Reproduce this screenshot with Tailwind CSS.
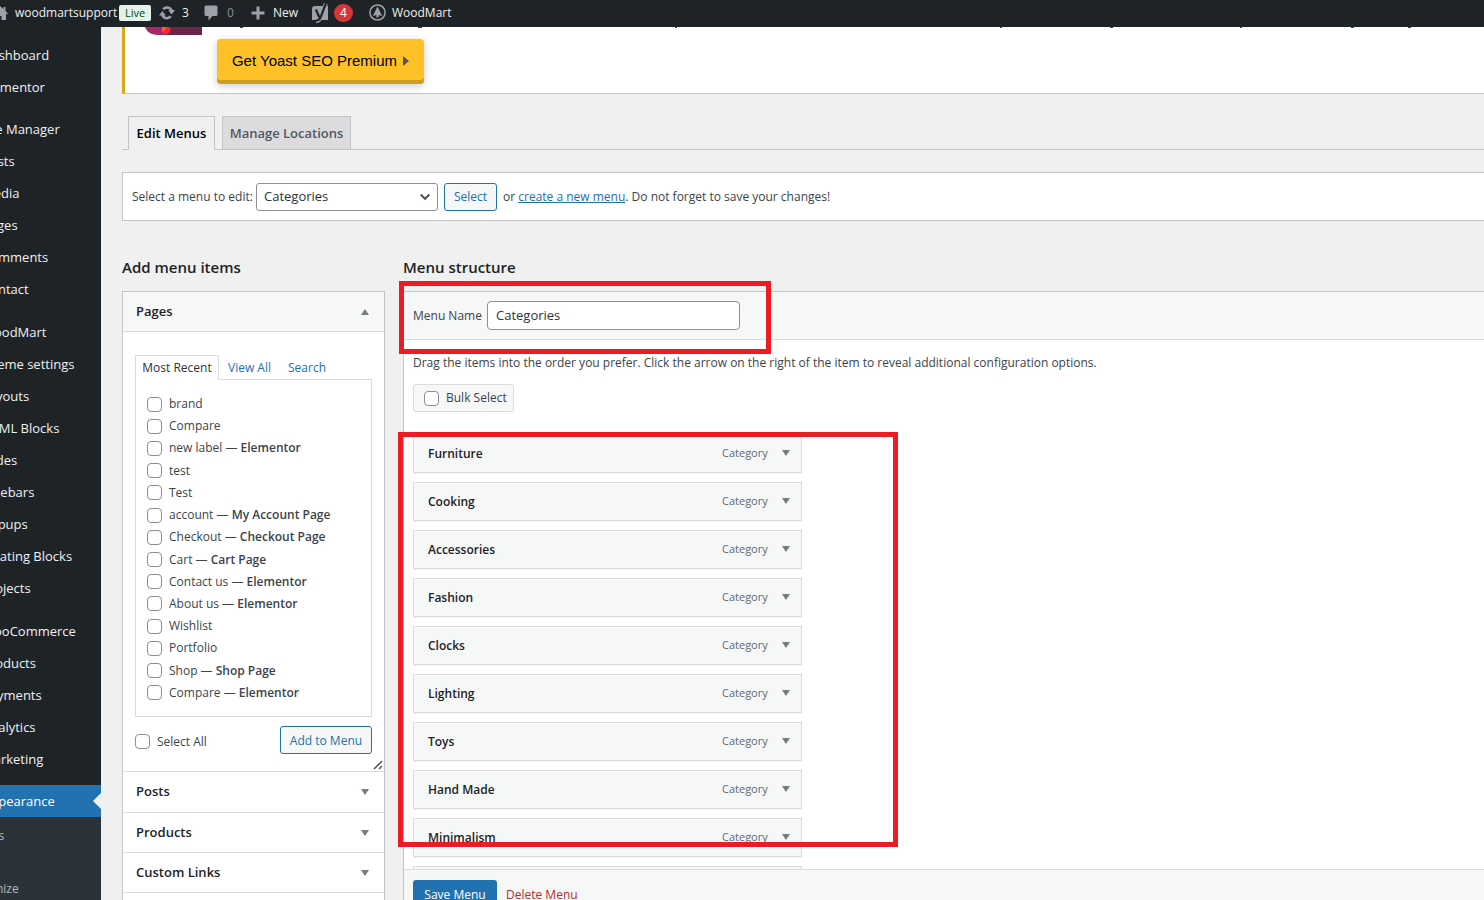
<!DOCTYPE html>
<html lang="en">
<head>
  <meta charset="UTF-8">
  <meta name="viewport" content="width=device-width, initial-scale=1.0">
  <title>Menus - woodmartsupport</title>
  <script src="https://cdn.jsdelivr.net/npm/@tailwindcss/browser@4"></script>
</head>
<body class="h-screen flex flex-col overflow-hidden bg-[#f0f0f0] font-['Open_Sans','Noto_Sans',sans-serif] text-xs text-[#3c434a]">

  <!-- Admin bar -->
  <header class="relative z-10 h-[27px] shrink-0 flex items-center pb-[2px] bg-[#1d2327] text-[#f0f0f1] overflow-hidden">
    <a href="#" class="flex items-center">
      <svg class="w-4 h-4 -ml-2 mr-[7px] shrink-0" viewBox="0 0 16 16" fill="#9ca2a7"><path d="M8 1 0 8.500l1 1 1-.9V15h4.500v-4h3v4H14V8.600l1 .9 1-1-2.500-2.400V2h-2v2.200z"/></svg>
      <span class="w-[98px] whitespace-nowrap">woodmartsupport</span>
    </a>
    <span class="ml-[6px] w-8 h-4 rounded-[2px] bg-[#e6f2e8] text-[#00450c] text-[11px] font-medium leading-4 text-center">Live</span>
    <a href="#" class="ml-2 flex items-center">
      <svg class="w-4 h-4 shrink-0" viewBox="0 0 16 16" fill="#9ca2a7"><path d="M8 1.200c2.700 0 4.900 1.500 5.800 3.900H16L12.600 9.500 9.200 5.100h2A3.900 3.900 0 0 0 5.300 5L3.200 3.500A6.400 6.400 0 0 1 8 1.200zM8 14.400a6.400 6.400 0 0 1-5.800-3.900H0L3.400 6.100l3.400 4.400h-2a3.900 3.900 0 0 0 5.900.1l2.100 1.500A6.400 6.400 0 0 1 8 14.400z"/></svg>
      <span class="ml-[7px] w-[7px]">3</span>
    </a>
    <a href="#" class="ml-[14px] flex items-center text-[#8a9096]">
      <svg class="w-4 h-4 shrink-0" viewBox="0 0 16 16" fill="#9ca2a7"><path d="M3 .500h10q1.500 0 1.500 1.500v7.500Q14.500 11 13 11H9.500L5.500 15.500V11H3Q1.500 11 1.500 9.500V2Q1.500.500 3 .500z"/></svg>
      <span class="ml-2 w-[7px]">0</span>
    </a>
    <a href="#" class="ml-4 flex items-center">
      <svg class="w-4 h-4 shrink-0" viewBox="0 0 16 16" fill="#9ca2a7"><path d="M6.500 1.500h3v5h5v3h-5v5h-3v-5h-5v-3h5z"/></svg>
      <span class="ml-[7px] w-[24px]">New</span>
    </a>
    <a href="#" class="ml-[14px] flex items-center">
      <svg class="w-[18px] h-5 shrink-0" viewBox="0 0 18 20"><path fill="#9ca2a7" d="M4 3h13v14H1V6a3 3 0 0 1 3-3z"/><g fill="none"><path stroke="#9ca2a7" stroke-width="4" d="M14.800.500 9.500 14.500Q8.500 18 5 18"/><path stroke="#1d2327" stroke-width="2.200" d="M4.800 6.500l3.700 8M14.800.500 9.500 14.500Q8.500 17.500 5 17.700"/></g></svg>
      <span class="ml-[5px] w-[19px] h-[18px] rounded-full bg-[#d63638] text-white leading-[18px] text-center">4</span>
    </a>
    <a href="#" class="ml-4 flex items-center">
      <svg class="w-[17px] h-[17px] shrink-0" viewBox="0 0 17 17"><circle cx="8.500" cy="8.500" r="7.600" fill="none" stroke="#9ca2a7" stroke-width="1.500"/><path fill="#9ca2a7" d="M8.500 2.500 13.200 12l-3.600-1V13.500H7.400V11l-3.600 1z"/></svg>
      <span class="ml-[6px]">WoodMart</span>
    </a>
  </header>

  <div class="flex-1 min-h-0 flex">

    <!-- Admin menu -->
    <nav class="w-[101px] shrink-0 overflow-hidden bg-[#1d2327] text-[13px] text-[#f0f0f1] pt-3">
      <ul class="-ml-[18px] whitespace-nowrap leading-8">
        <li><a href="#" class="block">Dashboard</a></li>
        <li><a href="#" class="block">Elementor</a></li>
        <li class="mt-[10px]"><a href="#" class="block">File Manager</a></li>
        <li><a href="#" class="block">Posts</a></li>
        <li><a href="#" class="block">Media</a></li>
        <li><a href="#" class="block">Pages</a></li>
        <li><a href="#" class="block">Comments</a></li>
        <li><a href="#" class="block">Contact</a></li>
        <li class="mt-[11px]"><a href="#" class="block">WoodMart</a></li>
        <li><a href="#" class="block">Theme settings</a></li>
        <li><a href="#" class="block">Layouts</a></li>
        <li><a href="#" class="block">HTML Blocks</a></li>
        <li><a href="#" class="block">Slides</a></li>
        <li><a href="#" class="block">Sidebars</a></li>
        <li><a href="#" class="block">Popups</a></li>
        <li><a href="#" class="block">Floating Blocks</a></li>
        <li><a href="#" class="block">Projects</a></li>
        <li class="mt-[11px]"><a href="#" class="block">WooCommerce</a></li>
        <li><a href="#" class="block">Products</a></li>
        <li><a href="#" class="block">Payments</a></li>
        <li><a href="#" class="block">Analytics</a></li>
        <li><a href="#" class="block">Marketing</a></li>
        <li class="mt-[10px] relative bg-[#2271b1] text-white">
          <a href="#" class="block">Appearance</a>
          <span class="absolute right-0 top-2 border-y-8 border-y-transparent border-r-8 border-r-[#f0f0f0]"></span>
        </li>
      </ul>
      <ul class="-ml-10 h-40 pt-[6px] bg-[#2c3338] text-xs text-[#b4b9be] leading-[26px]">
        <li><a href="#" class="block">Themes</a></li>
        <li class="h-[27px]"></li>
        <li><a href="#" class="block">Customize</a></li>
      </ul>
    </nav>

    <main class="flex-1 min-w-0 flex flex-col pl-[21px]">

      <!-- Yoast notice -->
      <section class="h-[67px] shrink-0 flex bg-white border-l-3 border-l-[#dba617] border-b border-b-[#c3c4c7]">
        <svg class="ml-5 w-[57px] h-2 shrink-0" viewBox="0 0 57 8"><path fill="#a4286a" d="M0 0h30v8H13Q3 8 0 0z"/><path fill="#6c2548" d="M25 0h32v8H22z"/><circle cx="21" cy="2.500" r="4.500" fill="#ee2b24"/><path fill="#ff5a3c" d="M17 0h5l-4 5q-1.500-2-1-5z"/></svg>
        <div class="ml-[15px] flex-1">
          <svg class="w-full h-px" fill="#3c434a"><path d="M23 0h3v1h-3zM201 0h4v1h-4zM458 0h2v1h-2zM783 0h2v1h-2zM893 0h3v1h-3zM1023 0h2v1h-2zM1134 0h3v1h-3zM1191 0h3v1h-3z"/></svg>
          <button class="mt-[11px] w-[207px] h-[45px] pb-[2px] rounded-[4px] bg-[#fec228] shadow-[inset_0_-4px_0_#cf9e1f,0_2px_8px_rgba(0,0,0,0.2)] font-['Liberation_Sans',Arial,sans-serif] text-[15px] text-black whitespace-nowrap flex items-center justify-center gap-[6px]">
            Get Yoast SEO Premium
            <svg class="w-[6px] h-[10px]" viewBox="0 0 6 10"><path fill="#50555a" d="M0 0l6 5-6 5z"/></svg>
          </button>
        </div>
      </section>

      <!-- Tabs -->
      <nav class="mt-[22px] pl-[6px] shrink-0 flex gap-[7px] border-b border-[#c3c4c7] text-[13px] font-semibold leading-8">
        <a href="#" class="-mb-px w-[87px] h-[34px] text-center bg-[#f0f0f0] text-black border border-b-0 border-[#c3c4c7]">Edit Menus</a>
        <a href="#" class="w-[129px] text-center bg-[#dcdcde] text-[#50575e] border border-b-0 border-[#c3c4c7]">Manage Locations</a>
      </nav>

      <!-- Menu selector -->
      <form class="mt-[22px] h-[49px] pl-[9px] shrink-0 flex items-center bg-white border border-r-0 border-[#c3c4c7]">
        <label for="menu" class="w-[117px] whitespace-nowrap">Select a menu to edit:</label>
        <div class="relative ml-[7px]">
          <select id="menu" class="w-[182px] h-7 pl-[7px] appearance-none rounded-[3px] border border-[#8c8f94] bg-white text-[13px] text-[#2c3338]">
            <option>Categories</option>
          </select>
          <svg class="absolute right-2 top-[10px] w-[10px] h-2 pointer-events-none" viewBox="0 0 10 8" fill="none" stroke="#50575e" stroke-width="2"><path d="M.700 1.500 5 5.800l4.300-4.300"/></svg>
        </div>
        <button type="button" class="ml-[6px] w-[53px] h-7 rounded-[3px] border border-[#2271b1] bg-[#f6f7f7] text-[#2271b1]">Select</button>
        <p class="ml-[6px] whitespace-nowrap">or <a href="#" class="text-[#2271b1] underline">create a new menu</a>. Do not forget to save your changes!</p>
      </form>

      <div class="flex-1 min-h-0 mt-9 flex gap-[18px]">

        <!-- Add menu items -->
        <div class="w-[263px] shrink-0">
          <h2 class="h-[34px] leading-5 text-[15px] font-semibold text-[#1d2327]">Add menu items</h2>
          <div class="bg-white border border-[#c3c4c7]">
            <h3 class="h-10 pl-[13px] pr-[15px] flex items-center justify-between bg-[#f6f7f7] border-b border-[#dcdcde] text-[13px] font-semibold text-[#1d2327]">Pages
              <svg class="w-2 h-[6px]" viewBox="0 0 8 6"><path fill="#787c82" d="M4 0l4 6H0z"/></svg>
            </h3>
            <div class="relative h-[440px] px-3 pt-[23px] border-b border-[#dcdcde]">
              <div class="flex leading-6">
                <a href="#" class="-mb-px w-[84px] h-[25px] text-center bg-white border border-b-0 border-[#dcdcde] text-[#2c3338]">Most Recent</a>
                <a href="#" class="ml-[9px] w-[43px] pt-px h-6 whitespace-nowrap text-[#2271b1]">View All</a>
                <a href="#" class="ml-[17px] pt-px h-6 text-[#2271b1]">Search</a>
              </div>
              <ul id="pages" class="h-[338px] px-[11px] pt-[13px] pb-3 flex flex-col justify-between border border-[#dcdcde]"></ul>
              <div class="mt-[9px] flex items-center justify-between">
                <label class="pt-[3px] flex items-center gap-[7px]"><input type="checkbox" class="appearance-none w-[15px] h-[15px] rounded-[4px] border border-[#8c8f94] bg-white">Select All</label>
                <button class="w-[92px] h-7 pt-px rounded-[3px] border border-[#2271b1] bg-[#f6f7f7] text-[#2271b1]">Add to Menu</button>
              </div>
              <svg class="absolute right-[1px] bottom-px w-[10px] h-[10px]" viewBox="0 0 10 10" stroke="#50575e" stroke-width="1.500"><path d="M1 9l8-8M6 9l3-3"/></svg>
            </div>
            <h3 class="h-[41px] pl-[13px] pr-[15px] flex items-center justify-between border-b border-[#dcdcde] text-[13px] font-semibold text-[#1d2327]">Posts
              <svg class="w-2 h-[6px]" viewBox="0 0 8 6"><path fill="#787c82" d="M0 0h8L4 6z"/></svg>
            </h3>
            <h3 class="h-10 pl-[13px] pr-[15px] flex items-center justify-between border-b border-[#dcdcde] text-[13px] font-semibold text-[#1d2327]">Products
              <svg class="w-2 h-[6px]" viewBox="0 0 8 6"><path fill="#787c82" d="M0 0h8L4 6z"/></svg>
            </h3>
            <h3 class="h-10 pl-[13px] pr-[15px] flex items-center justify-between border-b border-[#dcdcde] text-[13px] font-semibold text-[#1d2327]">Custom Links
              <svg class="w-2 h-[6px]" viewBox="0 0 8 6"><path fill="#787c82" d="M0 0h8L4 6z"/></svg>
            </h3>
            <div class="h-10"></div>
          </div>
        </div>

        <!-- Menu structure -->
        <div class="relative flex-1 min-w-0 flex flex-col">
          <h2 class="h-[34px] shrink-0 leading-5 text-[15px] font-semibold text-[#1d2327]">Menu structure</h2>
          <div class="flex-1 min-h-0 flex flex-col bg-white border-l border-t border-[#c3c4c7]">
            <div class="h-12 shrink-0 pl-[9px] flex items-center bg-[#f6f7f7] border-b border-[#dcdcde]">
              <label for="menu-name" class="w-[74px] whitespace-nowrap">Menu Name</label>
              <input id="menu-name" type="text" value="Categories" class="w-[253px] h-[29px] px-2 pb-px rounded-[4px] border border-[#8c8f94] bg-white text-[13px] text-[#2c3338]">
            </div>
            <div class="flex-1 min-h-0 overflow-hidden pl-[9px] pt-[13px]">
              <p class="leading-5 whitespace-nowrap">Drag the items into the order you prefer. Click the arrow on the right of the item to reveal additional configuration options.</p>
              <label class="mt-[11px] w-[101px] h-7 pl-[10px] flex items-center gap-[7px] whitespace-nowrap rounded-[3px] border border-[#dcdcde] bg-[#f6f7f7]"><input type="checkbox" class="appearance-none w-[15px] h-[15px] rounded-[4px] border border-[#8c8f94] bg-white">Bulk Select</label>
              <ul id="structure" class="mt-[22px] flex flex-col gap-[9px]"></ul>
            </div>
            <div class="h-[31px] shrink-0 pl-[9px] pt-[10px] flex items-start bg-[#f6f7f7] border-t border-[#dcdcde]">
              <button class="w-[84px] h-[30px] shrink-0 rounded-[3px] bg-[#2271b1] text-white">Save Menu</button>
              <a href="#" class="ml-[9px] leading-[30px] text-[#b32d2e]">Delete Menu</a>
            </div>
          </div>

          <!-- Highlight boxes -->
          <div class="absolute -left-1 top-6 w-[372px] h-[73px] border-5 border-[#ed1c24] pointer-events-none"></div>
          <div class="absolute -left-[5px] top-[175px] w-[500px] h-[415px] border-5 border-[#ed1c24] pointer-events-none"></div>
        </div>
      </div>
    </main>
  </div>

  <script>
    const pages = [
      ['brand'], ['Compare'], ['new label', 'Elementor'], ['test'], ['Test'],
      ['account', 'My Account Page'], ['Checkout', 'Checkout Page'], ['Cart', 'Cart Page'],
      ['Contact us', 'Elementor'], ['About us', 'Elementor'], ['Wishlist'], ['Portfolio'],
      ['Shop', 'Shop Page'], ['Compare', 'Elementor'],
    ];
    const items = ['Furniture', 'Cooking', 'Accessories', 'Fashion', 'Clocks', 'Lighting', 'Toys', 'Hand Made', 'Minimalism'];

    document.getElementById('pages').innerHTML = pages.map(([name, state]) => `
      <li>
        <label class="h-[22px] flex items-center gap-[7px] whitespace-nowrap">
          <input type="checkbox" class="appearance-none w-[15px] h-[15px] rounded-[4px] border border-[#8c8f94] bg-white">
          <span>${name}${state ? ` — <b class="font-semibold">${state}</b>` : ''}</span>
        </label>
      </li>`).join('');

    document.getElementById('structure').innerHTML = items.map((name) => `
      <li class="w-[389px] h-[39px] pl-[14px] pr-[11px] flex items-center border border-[#dcdcde] bg-[#f6f7f7] shadow-[0_1px_1px_rgba(0,0,0,0.04)]">
        <span class="flex-1 font-semibold text-[#1d2327]">${name}</span>
        <span class="w-[46px] text-[11px] text-[#646970]">Category</span>
        <svg class="ml-[14px] mb-[2px] w-2 h-[6px]" viewBox="0 0 8 6"><path fill="#787c82" d="M0 0h8L4 6z"/></svg>
      </li>`).join('') + '<li class="w-[389px] h-[39px] border border-[#dcdcde] bg-[#f6f7f7]"></li>';
  </script>
</body>
</html>
